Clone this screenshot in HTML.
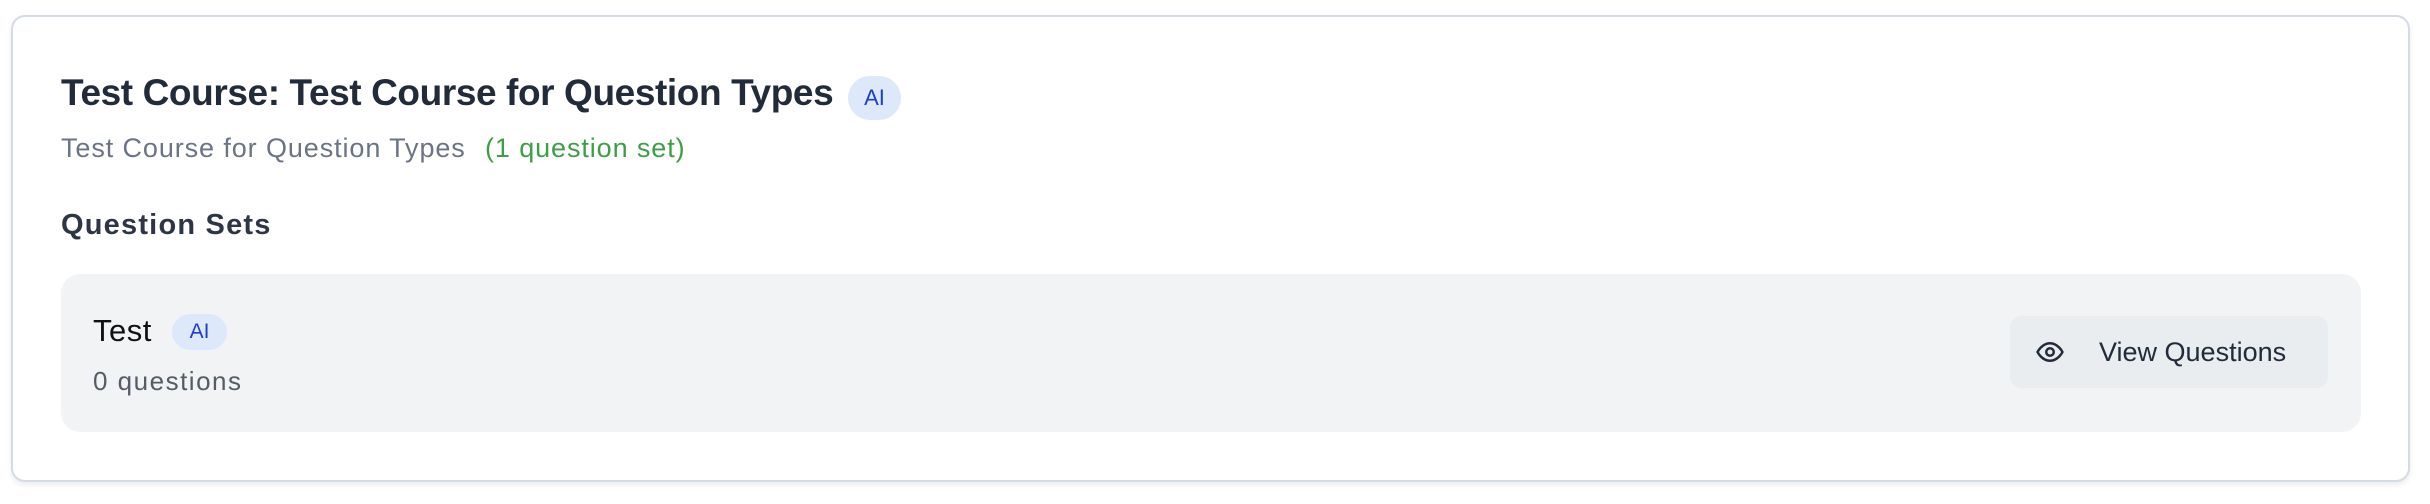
<!DOCTYPE html>
<html><head><style>
body{margin:0;width:2430px;height:504px;background:#fff;font-family:"Liberation Sans",sans-serif;position:relative;overflow:hidden}
.card{position:absolute;left:11px;top:15px;width:2395px;height:463px;border:2px solid #d5dbe4;border-radius:14px;box-shadow:0 3px 6px rgba(0,0,0,0.08);background:#fff}
.abs{position:absolute;white-space:nowrap}
.badge{position:absolute;background:#dde8fb;color:#1d3fc9;border-radius:22px;text-align:center}
.inner{position:absolute;left:61px;top:274px;width:2300px;height:158px;background:#f2f3f5;border-radius:19px}
.btn{position:absolute;left:2010px;top:316px;width:318px;height:72px;background:#eaedf0;border-radius:11px}
</style></head><body>
<div class="card"></div>
<div class="abs" style="left:61px;top:72px;font-size:37px;font-weight:bold;color:#222b3a;letter-spacing:-0.4px">Test Course: Test Course for Question Types</div>
<div class="badge" style="left:848px;top:76px;width:53px;height:44px;line-height:44px;font-size:22px">AI</div>
<div class="abs" style="left:61px;top:133px;font-size:27px;letter-spacing:0.9px;color:#6a7486">Test Course for Question Types</div>
<div class="abs" style="left:485px;top:133px;font-size:27px;letter-spacing:0.9px;color:#3d9e46">(1 question set)</div>
<div class="abs" style="left:61px;top:209px;font-size:29px;letter-spacing:1.2px;font-weight:bold;color:#2e3646">Question Sets</div>
<div class="inner"></div>
<div class="abs" style="left:93px;top:313px;font-size:31px;letter-spacing:0.5px;color:#111">Test</div>
<div class="badge" style="left:172px;top:314px;width:55px;height:36px;line-height:36px;font-size:21px">AI</div>
<div class="abs" style="left:93px;top:366px;font-size:26px;letter-spacing:1.5px;color:#555c68">0 questions</div>
<div class="btn"></div>
<svg class="abs" style="left:2035px;top:337px" width="30" height="30" viewBox="0 0 24 24" fill="none" stroke="#222b3a" stroke-width="2" stroke-linecap="round" stroke-linejoin="round"><path d="M2 12s3.5-7 10-7 10 7 10 7-3.5 7-10 7S2 12 2 12z"/><circle cx="12" cy="12" r="3"/></svg>
<div class="abs" style="left:2099px;top:337px;font-size:27px;color:#222b3a">View Questions</div>
</body></html>
